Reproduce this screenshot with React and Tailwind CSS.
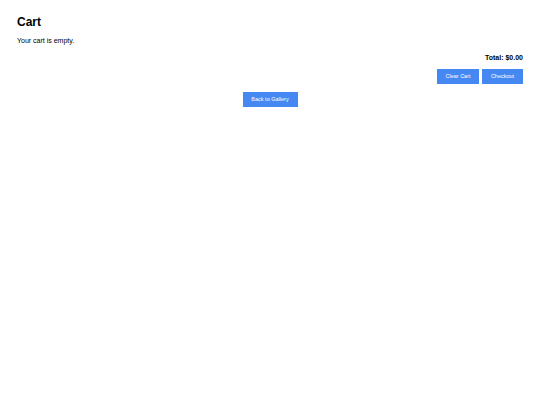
import React from 'react';

const App = () => {
    return (
        <div className="min-h-screen bg-white px-[17px] pt-[15px] font-['Liberation_Sans',Arial,sans-serif] text-black">
            {/* Header */}
            <h1 className="text-[12px] font-bold leading-[14px]">Cart</h1>
            <p className="mt-[7px] text-[7px] leading-[9px]">Your cart is empty.</p>

            {/* Summary */}
            <div className="mt-[8px] text-right text-[7px] font-bold leading-[9px]">Total: $0.00</div>
            <div className="mt-[7px] flex justify-end gap-[3px]">
                <button className="h-[15px] w-[42px] bg-[#4688f1] text-[5.5px] text-white">Clear Cart</button>
                <button className="h-[15px] w-[41px] bg-[#4688f1] text-[5.5px] text-white">Checkout</button>
            </div>

            <div className="mt-[8px] flex justify-center">
                <button className="h-[15px] w-[55px] bg-[#4688f1] text-[5.5px] text-white">Back to Gallery</button>
            </div>
        </div>
    );
};

export default App;
